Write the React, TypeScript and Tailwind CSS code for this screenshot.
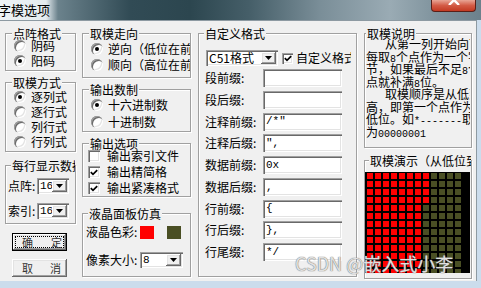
import React from 'react'

// 3D edges of the classic Windows controls
const sunken =
  'shadow-[inset_1px_1px_0_#a0a0a0,inset_2px_2px_0_#696969,inset_-1px_-1px_0_#ffffff,inset_-2px_-2px_0_#e3e3e3]'
const raised =
  'shadow-[inset_-1px_-1px_0_#696969,inset_1px_1px_0_#ffffff,inset_-2px_-2px_0_#a0a0a0,inset_2px_2px_0_#e3e3e3]'

function Group({
  title,
  className,
  titleClass,
  children,
}: {
  title: string
  className: string
  titleClass: string
  children?: React.ReactNode
}) {
  return (
    <div
      className={`relative shrink-0 border border-[#a0a0a0] shadow-[inset_1px_1px_0_#ffffff,1px_1px_0_#ffffff] ${className}`}
    >
      <span
        className={`absolute top-[-7px] overflow-hidden whitespace-nowrap bg-[#f0f0f0] px-px leading-[13px] ${titleClass}`}
      >
        {title}
      </span>
      <div className="h-full w-full overflow-hidden">{children}</div>
    </div>
  )
}

function Radio({ label, checked, row }: { label: string; checked?: boolean; row: string }) {
  return (
    <div className={`flex items-center gap-[5px] whitespace-nowrap ${row}`}>
      <span
        className={`flex h-[12px] w-[12px] shrink-0 items-center justify-center rounded-full bg-white ${sunken}`}
      >
        {checked && <span className="h-[4px] w-[4px] rounded-full bg-black" />}
      </span>
      <span className="leading-[12px]">{label}</span>
    </div>
  )
}

function Check({ checked, size }: { checked?: boolean; size: string }) {
  return (
    <span className={`flex shrink-0 items-center justify-center bg-white ${sunken} ${size}`}>
      {checked && (
        <svg width="8" height="7" viewBox="0 0 8 7">
          <path d="M0.8 3.2 L3 5.4 L7.2 1.2" stroke="black" strokeWidth="1.7" fill="none" />
        </svg>
      )}
    </span>
  )
}

function Combo({ value, className, mono }: { value: string; className: string; mono?: boolean }) {
  return (
    <div className={`flex shrink-0 bg-white p-[2px] ${sunken} ${className}`}>
      <span
        className={`flex flex-1 items-center overflow-hidden whitespace-nowrap pl-px leading-[12px] ${
          mono ? "font-['Liberation_Mono'] text-[11px]" : ''
        }`}
      >
        {value}
      </span>
      <span className={`flex w-[15px] items-center justify-center bg-[#f0f0f0] ${raised}`}>
        <svg width="7" height="4" viewBox="0 0 7 4">
          <path d="M0 0 H7 L3.5 4 Z" fill="black" />
        </svg>
      </span>
    </div>
  )
}

function Field({ label, value }: { label: string; value?: string }) {
  return (
    <div className="flex h-[18px] items-center">
      <span className="w-[58px] shrink-0 whitespace-nowrap leading-[12px]">{label}</span>
      <div
        className={`flex h-[18px] w-[79px] items-center bg-white pl-[3px] font-['Liberation_Mono'] text-[11px] ${sunken}`}
      >
        {value}
      </div>
    </div>
  )
}

function WinButton({ a, b, isDefault }: { a: string; b: string; isDefault?: boolean }) {
  return (
    <div
      className={`ml-[7px] flex h-[18px] w-[55px] shrink-0 ${isDefault ? 'border border-black' : ''}`}
    >
      <div className={`flex flex-1 bg-[#f0f0f0] ${isDefault ? 'p-[2px]' : 'p-[3px]'} ${raised}`}>
        <div
          className={`flex flex-1 items-center justify-between text-[11px] leading-[11px] text-[#333] ${
            isDefault ? 'border border-dotted border-black pl-[6px] pr-[1px]' : 'pl-[7px] pr-[3px]'
          }`}
        >
          <span>{a}</span>
          <span>{b}</span>
        </div>
      </div>
    </div>
  )
}

const A = ({ children }: { children: React.ReactNode }) => (
  <span className="font-['Liberation_Mono'] text-[10px] leading-[10px]">{children}</span>
)

export default function App() {
  const ledRows = Array.from({ length: 13 }, (_, r) => r)
  const ledCols = Array.from({ length: 12 }, (_, c) => c)

  return (
    <div className="relative h-[288px] w-[481px] overflow-hidden bg-[#cbdcec] font-['Noto_Sans_CJK_SC','Noto_Sans',sans-serif] text-[12px] text-black">
      {/* Title bar */}
      <div className="flex h-[20px] items-start bg-[linear-gradient(90deg,#eef3f6_0px,#e4ebef_46px,#6b828c_58px,#314b55_130px,#2c464f_190px,#465f69_250px,#7a8e98_320px,#9aabb4_390px,#7d919b_440px,#6c818c_481px)]">
        <span className="ml-[-2px] mt-[3px] text-[13px] leading-[14px]">字模选项</span>
        <div className="relative ml-auto mr-[5px] h-[12px] w-[45px] overflow-hidden rounded-b-[4px] border border-t-0 border-[#5a1f17] bg-[linear-gradient(180deg,#e8a595_0%,#d35b45_50%,#c23a22_100%)]">
          <svg className="absolute left-[16px] top-[-5px]" width="12" height="10" viewBox="0 0 12 10">
            <path d="M1 0 L11 10 M11 0 L1 10" stroke="#ffffff" strokeWidth="2.4" />
          </svg>
        </div>
      </div>

      {/* Dialog body */}
      <div className="flex h-[261px] w-[477px] border-t border-r border-[#8d9aa2] bg-[#f0f0f0] pl-[5px] pt-[12px]">
        {/* Column 1 */}
        <div className="flex w-[71px] shrink-0 flex-col">
          <Group title="点阵格式" className="h-[38px]" titleClass="left-[6px]">
            <div className="flex flex-col pl-[8px] pt-[4px]">
              <Radio label="阴码" row="h-[15px]" />
              <Radio label="阳码" checked row="h-[15px]" />
            </div>
          </Group>
          <Group title="取模方式" className="mt-[11px] h-[70px]" titleClass="left-[6px]">
            <div className="flex flex-col pl-[8px] pt-[6px]">
              <Radio label="逐列式" checked row="h-[15px]" />
              <Radio label="逐行式" row="h-[15px]" />
              <Radio label="列行式" row="h-[15px]" />
              <Radio label="行列式" row="h-[15px]" />
            </div>
          </Group>
          <Group title="每行显示数据" className="mt-[13px] h-[59px]" titleClass="left-[5px] max-w-[64px]">
            <div className="flex flex-col gap-[9px] pl-[2px] pt-[12px]">
              <div className="flex h-[16px] items-center">
                <span className="w-[29px] shrink-0 leading-[12px]">点阵:</span>
                <Combo value="16" className="h-[16px] w-[32px]" mono />
              </div>
              <div className="flex h-[16px] items-center">
                <span className="w-[29px] shrink-0 leading-[12px]">索引:</span>
                <Combo value="16" className="h-[16px] w-[32px]" mono />
              </div>
            </div>
          </Group>
          <div className="mt-[9px]">
            <WinButton a="确" b="定" isDefault />
          </div>
          <div className="mt-[8px]">
            <WinButton a="取" b="消" />
          </div>
        </div>

        {/* Column 2 */}
        <div className="ml-[6px] flex w-[109px] shrink-0 flex-col">
          <Group title="取模走向" className="h-[45px]" titleClass="left-[6px]">
            <div className="flex flex-col pl-[8px] pt-[7px]">
              <Radio label="逆向（低位在前）" checked row="h-[16px]" />
              <Radio label="顺向（高位在前）" row="h-[16px]" />
            </div>
          </Group>
          <Group title="输出数制" className="mt-[11px] h-[43px]" titleClass="left-[6px]">
            <div className="flex flex-col pl-[8px] pt-[6px]">
              <Radio label="十六进制数" checked row="h-[17px]" />
              <Radio label="十进制数" row="h-[17px]" />
            </div>
          </Group>
          <Group title="输出选项" className="mt-[11px] h-[54px]" titleClass="left-[6px]">
            <div className="flex flex-col pl-[5px] pt-[4px]">
              {[
                ['输出索引文件', false],
                ['输出精简格', true],
                ['输出紧凑格式', true],
              ].map(([label, on]) => (
                <div key={label as string} className="flex h-[16px] items-center gap-[7px] whitespace-nowrap">
                  <Check checked={on as boolean} size="h-[12px] w-[12px]" />
                  <span className="leading-[12px]">{label}</span>
                </div>
              ))}
            </div>
          </Group>
          <Group title="液晶面板仿真" className="mt-[16px] h-[64px]" titleClass="left-[5px]">
            <div className="flex flex-col pl-[3px] pt-[11px]">
              <div className="flex h-[14px] items-center">
                <span className="w-[54px] shrink-0 whitespace-nowrap leading-[12px]">液晶色彩:</span>
                <span className="h-[13px] w-[14px] bg-[#ff0000]" />
                <span className="ml-[13px] h-[13px] w-[14px] bg-[#4a4f24]" />
              </div>
              <div className="mt-[13px] flex h-[16px] items-center">
                <span className="w-[54px] shrink-0 whitespace-nowrap leading-[12px]">像素大小:</span>
                <Combo value="8" className="h-[16px] w-[43px]" mono />
              </div>
            </div>
          </Group>
        </div>

        {/* Column 3 */}
        <div className="ml-[7px] flex w-[159px] shrink-0 flex-col">
          <Group title="自定义格式" className="h-[244px]" titleClass="left-[5px]">
            <div className="flex flex-col pt-[16px]">
              <div className="flex h-[16px] items-center pl-[7px]">
                <Combo value="C51格式" className="h-[16px] w-[72px]" />
                <span className="ml-[4px]">
                  <Check checked size="h-[11px] w-[11px]" />
                </span>
                <span className="ml-[3px] w-[55px] shrink-0 overflow-hidden whitespace-nowrap leading-[12px]">
                  自定义格式
                </span>
              </div>
              <div className="mt-[3px] flex flex-col gap-[3.75px] pl-[6px]">
                <Field label="段前缀:" />
                <Field label="段后缀:" />
                <Field label="注释前缀:" value={'/*"'} />
                <Field label="注释后缀:" value={'",'} />
                <Field label="数据前缀:" value="0x" />
                <Field label="数据后缀:" value="," />
                <Field label="行前缀:" value="{" />
                <Field label="行后缀:" value="}," />
                <Field label="行尾缀:" value="*/" />
              </div>
            </div>
          </Group>
        </div>

        {/* Column 4 */}
        <div className="ml-[7px] flex w-[108px] shrink-0 flex-col">
          <Group title="取模说明" className="h-[115px]" titleClass="left-[1px]">
            <div className="flex w-[105px] flex-col overflow-hidden whitespace-nowrap pl-px pt-[4px] leading-[12.5px]">
              <div className="h-[12.5px] pl-[19px]">从第一列开始向下</div>
              <div className="h-[12.5px]">
                每取<A>8</A>个点作为一个字
              </div>
              <div className="h-[12.5px]">
                节，如果最后不足<A>8</A>个
              </div>
              <div className="h-[12.5px]">
                点就补满<A>8</A>位。
              </div>
              <div className="h-[12.5px] pl-[19px]">取模顺序是从低到</div>
              <div className="h-[12.5px]">高，即第一个点作为最</div>
              <div className="h-[12.5px]">
                低位。如<A>*-------</A>取
              </div>
              <div className="h-[12.5px]">
                为<A>00000001</A>
              </div>
            </div>
          </Group>
          <Group title="取模演示（从低位到高位）" className="mt-[12px] h-[119px]" titleClass="left-[4px] max-w-[102px]">
            <div className="mt-[11px] h-[101px] w-[105px] overflow-hidden bg-black pl-[2px] pt-px">
              <div className="grid grid-cols-[repeat(12,6px)] gap-[2px]">
                {ledRows.flatMap((r) =>
                  ledCols.map((c) => (
                    <span
                      key={`${r}-${c}`}
                      className={`h-[6px] w-[6px] ${c < (r < 4 ? 8 : 7) ? 'bg-[#ff0000]' : 'bg-[#4a4f24]'}`}
                    />
                  ))
                )}
              </div>
            </div>
          </Group>
        </div>
      </div>

      {/* watermark over the screenshot */}
      <span className="absolute left-[295px] top-[252px] whitespace-nowrap text-[18px] leading-[22px] text-[#f4f4f4]/85 [text-shadow:0_0_1px_#777,0_0_1px_#777]">
        CSDN @嵌入式小李
      </span>
    </div>
  )
}
